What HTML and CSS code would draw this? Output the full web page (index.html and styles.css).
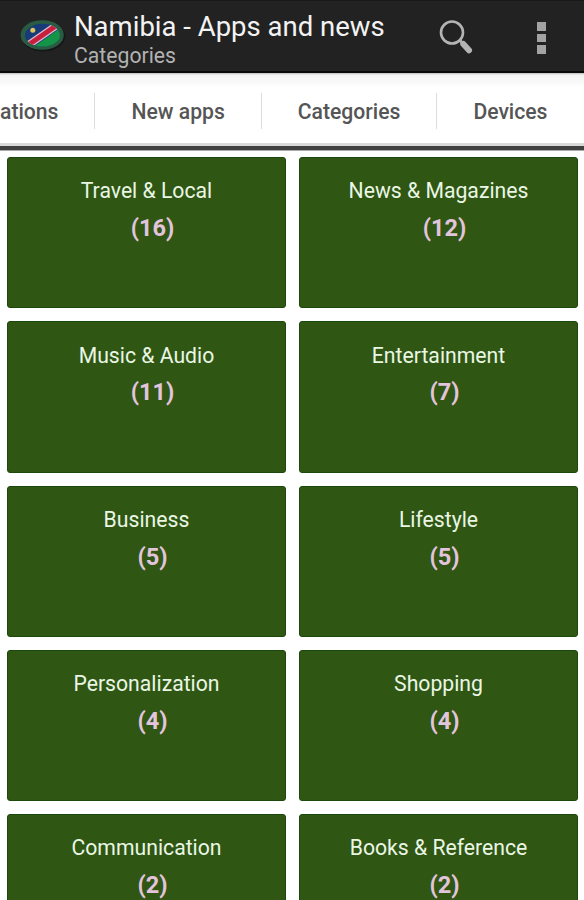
FILE: index.html
```html
<!DOCTYPE html>
<html lang="en">
<head>
    <meta charset="UTF-8">
    <meta name="viewport" content="width=device-width, initial-scale=1.0">
    <title>Namibia - Apps and news</title>
    <link rel="stylesheet" href="styles.css">
</head>
<body>

    <header class="action-bar">
        <!-- App icon: oval flag -->
        <svg class="app-icon" width="46" height="34" viewBox="0 0 46 34">
            <defs>
                <clipPath id="flag"><ellipse cx="22.5" cy="16.2" rx="17.5" ry="11.4"/></clipPath>
            </defs>
            <ellipse cx="23.3" cy="17.6" rx="22" ry="15" fill="#141817"/>
            <ellipse cx="22.2" cy="16" rx="21.6" ry="14.8" fill="#2b5c43"/>
            <g clip-path="url(#flag)">
                <rect width="46" height="34" fill="#173b78"/>
                <path d="M5 34L46 5V34Z" fill="#149447"/>
                <path d="M4 29L40 4" stroke="#d9bfd0" stroke-width="7.500"/>
                <path d="M4 29L40 4" stroke="#c8203c" stroke-width="5"/>
            </g>
            <circle cx="12.800" cy="11.300" r="2.500" fill="#e2c45c"/>
        </svg>
        <div class="titles">
            <h1>Namibia - Apps and news</h1>
            <p class="subtitle">Categories</p>
        </div>
        <svg class="search-icon" width="36" height="36" viewBox="0 0 36 36">
            <circle cx="14" cy="13.500" r="11" fill="none" stroke="#b4b4b4" stroke-width="2.600"/>
            <path d="M21 20.500L25 24.500" stroke="#b4b4b4" stroke-width="3"/>
            <path d="M25.300 25L31 31.300" stroke="#b4b4b4" stroke-width="6" stroke-linecap="round"/>
        </svg>
        <div class="overflow-icon">
            <span></span>
            <span></span>
            <span></span>
        </div>
    </header>

    <nav class="tabs">
        <a class="tab">ations</a>
        <a class="tab">New apps</a>
        <a class="tab">Categories</a>
        <a class="tab">Devices</a>
    </nav>

    <main class="grid">
        <div class="tile">
            <span class="name">Travel &amp; Local</span>
            <span class="count">(16)</span>
        </div>
        <div class="tile">
            <span class="name">News &amp; Magazines</span>
            <span class="count">(12)</span>
        </div>
        <div class="tile">
            <span class="name">Music &amp; Audio</span>
            <span class="count">(11)</span>
        </div>
        <div class="tile">
            <span class="name">Entertainment</span>
            <span class="count">(7)</span>
        </div>
        <div class="tile">
            <span class="name">Business</span>
            <span class="count">(5)</span>
        </div>
        <div class="tile">
            <span class="name">Lifestyle</span>
            <span class="count">(5)</span>
        </div>
        <div class="tile">
            <span class="name">Personalization</span>
            <span class="count">(4)</span>
        </div>
        <div class="tile">
            <span class="name">Shopping</span>
            <span class="count">(4)</span>
        </div>
        <div class="tile">
            <span class="name">Communication</span>
            <span class="count">(2)</span>
        </div>
        <div class="tile">
            <span class="name">Books &amp; Reference</span>
            <span class="count">(2)</span>
        </div>
    </main>

</body>
</html>
```
FILE: styles.css
```css
* {
    box-sizing: border-box;
}

body {
    margin: 0;
    height: 900px;
    overflow: hidden;
    display: flex;
    flex-direction: column;
    background-color: #fff;
    font-family: Roboto, sans-serif;
}

/* Top bar */
.action-bar {
    flex: none;
    display: flex;
    align-items: flex-start;
    height: 73px;
    padding-left: 20px;
    background-color: #222;
    border-top: 1px solid #191919;
    border-bottom: 2px solid #080808;
}
.app-icon {
    margin-top: 18px;
}
.titles {
    width: 372px;
    padding: 9px 0 0 8px;
    white-space: nowrap;
}
h1 {
    margin: 0;
    color: #f3f3f3;
    font-size: 27.500px;
    font-weight: 400;
    line-height: 34px;
}
.subtitle {
    margin: 0;
    color: #b2b2b2;
    font-size: 21.200px;
    line-height: 23px;
}
.search-icon {
    margin-top: 18px;
}
.overflow-icon {
    display: flex;
    flex-direction: column;
    gap: 3px;
    margin: 21px 0 0 63px;
}
.overflow-icon span {
    width: 9px;
    height: 8.600px;
    background-color: #a3a3a3;
}

/* Scrolling tabs */
.tabs {
    flex: none;
    display: flex;
    align-items: center;
    height: 77px;
    padding-top: 2px;
    background: linear-gradient(#bbb 0, #f1f1f1 2px, #fff 14px);
    border-bottom: 4px solid #404040;
    box-shadow: inset 0 -3px #d9d9d9, 0 1px #aaa;
}
.tab {
    height: 36px;
    padding: 0 36px;
    border-right: 1.500px solid #dcdcdc;
    color: #555;
    font-size: 21.150px;
    font-weight: 500;
    line-height: 37px;
    white-space: nowrap;
}
.tab:first-child {
    padding-left: 0;
}
.tab:last-child {
    border-right: none;
}

/* Category tiles */
.grid {
    display: grid;
    grid-template-columns: 279px 279px;
    grid-auto-rows: 151.200px;
    gap: 13px;
    padding: 7.200px 6px 0 7px;
}
.tile {
    display: flex;
    flex-direction: column;
    align-items: center;
    padding-top: 19.200px;
    background-color: #305614;
    border: 1px solid #1b480c;
    border-radius: 3px;
}
.name {
    color: #e9f7e4;
    font-size: 21.200px;
    line-height: 28px;
}
.count {
    padding: 7.800px 0 0 12px;
    color: #e2c5dc;
    font-size: 23.600px;
    font-weight: 700;
    line-height: 30px;
}
```
